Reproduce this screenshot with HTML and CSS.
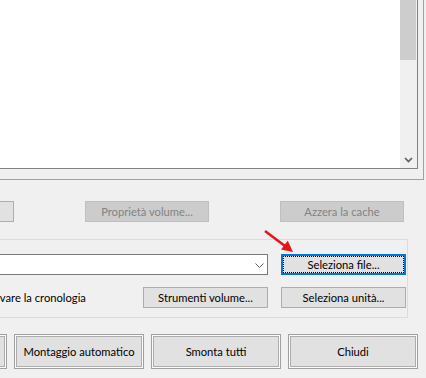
FILE: index.html
```html
<!DOCTYPE html>
<html>
    <head>
        <meta charset="utf-8">
        <title>VeraCrypt</title>
        <link rel="stylesheet" href="styles.css">
    </head>
    <body>
        <div class="window">
            <div class="frame">
                <div class="list">
                    <div class="list-body"></div>
                    <div class="scrollbar">
                        <div class="thumb"></div>
                        <div class="scroll-btn">
                            <svg width="9" height="6" viewBox="0 0 9 6"><path d="M1 1 L4.5 4.5 L8 1" fill="none" stroke="#606060" stroke-width="1.7"/></svg>
                        </div>
                    </div>
                </div>
            </div>

            <div class="actions">
                <button class="btn">Crea volume...</button>
                <button class="btn" disabled>Proprietà volume...</button>
                <button class="btn" disabled>Azzera la cache</button>
            </div>

            <div class="group">
                <div class="row">
                    <div class="combo">
                        <svg width="9" height="5" viewBox="0 0 9 5"><path d="M0.5 0.5 L4.5 4.5 L8.5 0.5" fill="none" stroke="#606060" stroke-width="1"/></svg>
                    </div>
                    <button class="btn focused">Seleziona file...</button>
                </div>
                <div class="row">
                    <label class="check"><span class="box"></span>Non salvare la cronologia</label>
                    <button class="btn">Strumenti volume...</button>
                    <button class="btn">Seleziona unità...</button>
                </div>
            </div>

            <div class="footer">
                <button class="big">Monta</button>
                <button class="big">Montaggio automatico</button>
                <button class="big">Smonta tutti</button>
                <button class="big">Chiudi</button>
            </div>

            <!-- annotation arrow pointing at the file button -->
            <svg class="arrow" width="426" height="378" viewBox="0 0 426 378">
                <line x1="265" y1="231" x2="285" y2="246" stroke="#e5141b" stroke-width="2.6"/>
                <polygon points="293,252 281,249.5 287.8,240.8" fill="#e5141b"/>
            </svg>
        </div>
    </body>
</html>
```

FILE: styles.css
```css
body {
    background: #f0f0f0;
    color: #000;
    font-family: Lato, "Liberation Sans", sans-serif;
    font-size: 11.2px;
    margin: 0;
}

.window {
    height: 378px;
    overflow: hidden;
    position: relative;
    width: 426px;
}

.frame {
    border-bottom: 1px solid #a0a0a0;
    border-right: 1px solid #a0a0a0;
    box-sizing: border-box;
    height: 180px;
    width: 424px;
}

.list {
    background: #fff;
    border-bottom: 1px solid #828282;
    border-right: 1px solid #828282;
    box-sizing: border-box;
    display: flex;
    height: 169px;
    width: 418px;
}

.list-body {
    flex: 1;
}

.scrollbar {
    background: #f0f0f0;
    display: flex;
    flex-direction: column;
    justify-content: space-between;
    width: 17px;
}

.thumb {
    background: #cdcdcd;
    height: 60px;
    margin-right: 1px;
}

.scroll-btn {
    align-items: center;
    display: flex;
    height: 17px;
    justify-content: center;
}

.btn {
    background: #e1e1e1;
    border: 1px solid #adadad;
    box-sizing: border-box;
    color: #000;
    font: inherit;
    height: 21px;
    padding: 0;
    width: 125px;
}

.btn:disabled {
    background: #cccccc;
    border-color: #bfbfbf;
    color: #838383;
}

.btn.focused {
    border-color: #0078d7;
    box-shadow: inset 0 0 0 1px #0078d7;
    outline: 1px dotted #000;
    outline-offset: -3px;
}

.actions {
    box-sizing: border-box;
    display: flex;
    gap: 71px;
    height: 59px;
    margin-left: -110px;
    padding-top: 21px;
}

.actions .btn {
    width: 124px;
}

.group {
    border: 1px solid #dcdcdc;
    box-sizing: border-box;
    display: flex;
    flex-direction: column;
    gap: 12px;
    height: 79px;
    margin-left: -58px;
    padding: 14px 1px 0 2px;
    width: 466px;
}

.row {
    align-items: center;
    display: flex;
    gap: 13px;
    height: 21px;
}

.combo {
    align-items: center;
    background: #fff;
    border: 1px solid #7a7a7a;
    box-sizing: border-box;
    display: flex;
    flex: 1;
    height: 21px;
    justify-content: flex-end;
    padding: 1px 3px 0 0;
}

.check {
    align-items: center;
    display: flex;
    flex: 1;
    gap: 5px;
}

.box {
    background: #fff;
    border: 1px solid #333;
    box-sizing: border-box;
    height: 13px;
    width: 13px;
}

.footer {
    box-sizing: border-box;
    display: flex;
    gap: 7px;
    height: 60px;
    margin-left: -123px;
    padding-top: 16px;
}

.big {
    background: #e1e1e1;
    border: 1px solid #a0a0a0;
    box-shadow: inset 0 0 0 1px #fbfbfb, inset 0 0 0 2px #adadad;
    box-sizing: border-box;
    color: #000;
    font: inherit;
    height: 35px;
    padding: 0;
    width: 130px;
}

.arrow {
    left: 0;
    pointer-events: none;
    position: absolute;
    top: 0;
}
```
